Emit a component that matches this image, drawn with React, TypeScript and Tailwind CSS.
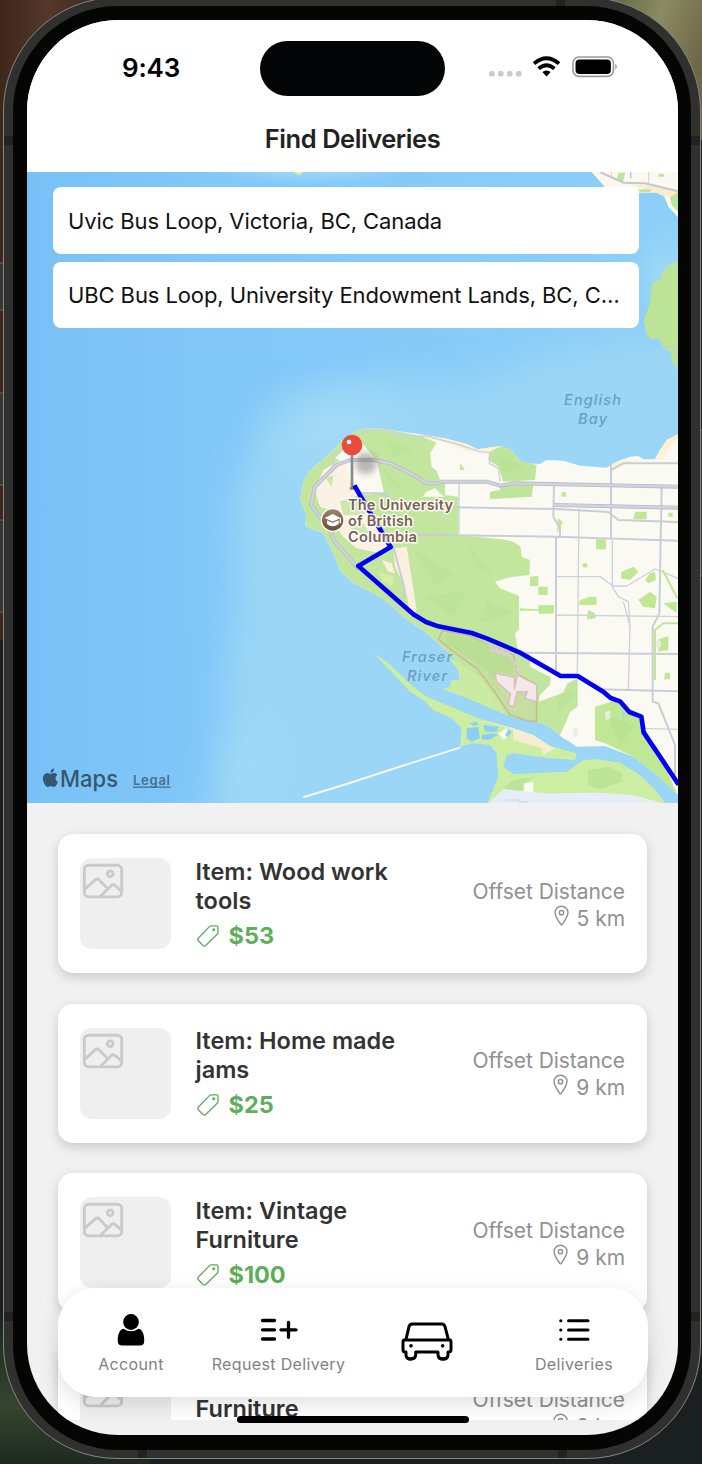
import React from "react";
import { IoImageOutline, IoLocationOutline } from "react-icons/io5";

type Delivery = { item: string; price: string; distance: string };

const deliveries: Delivery[] = [
  { item: "Item: Wood work tools", price: "$53", distance: "5 km" },
  { item: "Item: Home made jams", price: "$25", distance: "9 km" },
  { item: "Item: Vintage Furniture", price: "$100", distance: "9 km" },
  { item: "Item: Vintage Furniture", price: "$100", distance: "9 km" },
];

function Backdrop() {
  return (
    <svg className="absolute inset-0" width="702" height="1464" viewBox="0 0 702 1464">
      <defs>
        <linearGradient id="wood" x1="0" y1="0" x2="1" y2="0">
          <stop offset="0" stopColor="#3f261b" />
          <stop offset="0.4" stopColor="#54382b" />
          <stop offset="1" stopColor="#34221a" />
        </linearGradient>
        <linearGradient id="bark" x1="0" y1="0" x2="1" y2="0.4">
          <stop offset="0" stopColor="#4c5234" />
          <stop offset="0.6" stopColor="#8b8b62" />
          <stop offset="1" stopColor="#6f6748" />
        </linearGradient>
        <linearGradient id="moss" x1="0" y1="0" x2="0" y2="1">
          <stop offset="0" stopColor="#1c2a1c" />
          <stop offset="0.6" stopColor="#35452f" />
          <stop offset="1" stopColor="#1d2920" />
        </linearGradient>
      </defs>
      <rect width="702" height="1464" fill="#1a2020" />
      <rect width="120" height="640" fill="url(#wood)" />
      <rect x="580" width="122" height="140" fill="url(#bark)" />
      <rect y="1320" width="150" height="144" fill="url(#moss)" />
      <g fill="#363636" stroke="#686868">
        <rect x="-2" y="263" width="10" height="47" />
        <rect x="-2" y="393" width="10" height="92" />
        <rect x="-2" y="520" width="10" height="92" />
        <rect x="698" y="430" width="10" height="146" />
      </g>
    </svg>
  );
}

function FrameBands() {
  return (
    <svg className="absolute inset-0" width="702" height="1464" viewBox="0 0 702 1464">
      <g fill="#222222">
        <rect x="4" y="136" width="9" height="9" />
        <rect x="691" y="136" width="9" height="9" />
        <rect x="4" y="1312" width="9" height="9" />
        <rect x="691" y="1312" width="9" height="9" />
        <rect x="138" y="1450" width="9" height="8" />
        <rect x="558" y="1450" width="9" height="8" />
        <rect x="556" y="0" width="9" height="6" />
      </g>
    </svg>
  );
}

function StatusBar() {
  return (
    <div className="relative flex h-[92px] shrink-0 items-center justify-between pl-[95px] pr-[59px]">
      <span className="pt-[4px] text-[26px] font-semibold leading-[32px] tracking-[-0.2px] text-black">9:43</span>
      <div className="absolute left-[233px] top-[20.5px] h-[55px] w-[185px] rounded-full bg-[#040506]" />
      <svg width="132" height="24" viewBox="487 54 132 24">
        <g fill="#cbcbcb">
          <rect x="489" y="71" width="5.6" height="5.6" rx="1.8" />
          <rect x="498" y="71" width="5.6" height="5.6" rx="1.8" />
          <rect x="507" y="71" width="5.6" height="5.6" rx="1.8" />
          <rect x="516" y="71" width="5.6" height="5.6" rx="1.8" />
        </g>
        <g fill="none" stroke="#000" strokeWidth="3.8">
          <path d="M534 63.6 Q546.5 52.8 559 63.6" />
          <path d="M538.6 68.6 Q546.5 61.8 554.4 68.6" />
        </g>
        <path d="M542.3 72 Q546.5 68.8 550.7 72 L546.5 76.6Z" fill="#000" />
        <rect x="573" y="57" width="40.4" height="19.4" rx="6" fill="none" stroke="#999" strokeWidth="1.6" />
        <rect x="575.5" y="59.4" width="35.4" height="14.6" rx="4" fill="#000" />
        <path d="M615.3 63.6 Q618.4 66.7 615.3 69.8Z" fill="#999" />
      </svg>
    </div>
  );
}

function MapCanvas() {
  return (
    <svg
      className="absolute inset-0 font-[Inter,'Liberation_Sans',sans-serif]"
      width="651"
      height="631"
      viewBox="27 172 651 631"
    >
      <defs>
        <linearGradient id="sea" x1="0" y1="0" x2="1" y2="0">
          <stop offset="0" stopColor="#79c0f6" />
          <stop offset="0.3" stopColor="#82c8f8" />
          <stop offset="1" stopColor="#8ccff8" />
        </linearGradient>
        <radialGradient id="shallow">
          <stop offset="0" stopColor="#a6dcf7" />
          <stop offset="1" stopColor="#a6dcf7" stopOpacity="0" />
        </radialGradient>
        <linearGradient id="badge" x1="0" y1="0" x2="0" y2="1">
          <stop offset="0" stopColor="#a2836a" />
          <stop offset="1" stopColor="#6d4c39" />
        </linearGradient>
        <filter id="soft" x="-50%" y="-50%" width="200%" height="200%">
          <feGaussianBlur stdDeviation="9" />
        </filter>
        <filter id="shelf" x="-20%" y="-20%" width="140%" height="140%">
          <feGaussianBlur stdDeviation="17" />
        </filter>
      </defs>
      <rect x="27" y="172" width="651" height="631" fill="url(#sea)" />
      <path d="M700 330L560 350L460 385L380 378L310 398L260 435L234 500L238 590L226 680L226 750L198 840H700Z" fill="#9bd6f6" filter="url(#shelf)" />
      <ellipse cx="330" cy="425" rx="90" ry="60" fill="url(#shallow)" opacity=".7" />
      <ellipse cx="250" cy="760" rx="50" ry="60" fill="url(#shallow)" opacity=".5" />
      <ellipse cx="310" cy="168" rx="100" ry="16" fill="url(#shallow)" />
      <ellipse cx="668" cy="280" rx="40" ry="60" fill="url(#shallow)" opacity=".8" />
      <path d="M294 172H303L300 175L296 174Z" fill="#e6eda0" />

      {/* North shore */}
      <g transform="translate(440 160) scale(.33333)">
        <path d="M455 36L495 82L595 98L650 98L672 108L685 140L720 178V36Z" fill="#fbf8ef" />
        <path d="M560 72L610 85L650 98L680 112L714 108V96L640 78Z" fill="#fbeccb" />
        <path d="M535 38H555L550 64L530 60Z M690 112L714 95V155L695 135Z M595 88H632V97H600Z M656 42H672V50H656Z" fill="#bfe59a" />
        <path d="M480 36L550 68L615 70L714 94" fill="none" stroke="#c3c7d2" strokeWidth="6" />
        <path d="M626 36V72M514 36V50" stroke="#d0d3da" strokeWidth="3" />
        <path d="M572 36V55" stroke="#8fd0f6" strokeWidth="4" />
        <path d="M720 304L690 312L665 340L660 358L635 370L630 430L612 480L618 520L632 538L655 535L672 565L692 575L698 610L720 638Z" fill="#bde397" />
        <path d="M660 540L670 560H695L707 575L714 630" fill="none" stroke="#c8ceca" strokeWidth="4" />
      </g>

      <g transform="translate(280 400) scale(.33333)">
        {/* Mainland */}
        <path d="M60 300L70 245L85 215L150 160L190 118L235 88L290 84L345 92L420 103L500 116L560 132L592 148L665 138L695 152L720 182L735 190L780 192L800 180L850 182L900 197L980 203L1010 185L1050 170L1075 168L1090 178L1125 178L1140 150L1160 120L1200 100V1190L1155 1145L1110 1108L1060 1070L975 1038L890 1040L840 1005L800 975L770 966L700 952L540 885L490 868L510 860L515 842L540 840L535 812L545 795L480 735L440 700L370 650L330 612L300 590L215 545L180 510L165 470L130 400L95 387L75 377L80 345Z" fill="#fbfaf2" />
        <path d="M420 103L500 116L560 132L592 148L665 138L640 160H600L560 152L500 130L430 115ZM980 205L1010 185L1090 178L1010 200ZM1125 178L1160 120L1200 100V112L1168 140L1150 178Z" fill="#fbf3d0" />
        {/* Parks */}
        <path d="M60 300L70 245L85 215L150 160L190 118L235 88L290 84L345 92L420 107L470 128L450 160L455 200L470 212L480 240L495 250V285L535 290V405L665 418L700 425L722 440L725 470L750 480L748 525L690 532L645 545L660 565L717 588V690L705 700L715 760L750 762V800L812 832L810 855L780 885L775 905L850 878L862 850L893 835V920L870 935L858 965L840 1005L800 975L770 966L700 952L540 885L490 868L510 860L515 842L540 840L535 812L545 795L480 735L440 700L370 650L330 612L300 590L215 545L180 510L165 470L130 400L95 387L75 377L80 345Z" fill="#c2e69e" />
        <path d="M420 300L440 275L465 265L480 280L495 290L425 290Z" fill="#fbfaf2" />
        <path d="M490 868L510 860L515 842L540 840L535 812L500 765L600 830L680 945L540 885Z" fill="#c9eba2" />
        <path d="M630 155L665 138L695 152L720 182L770 195L765 240L670 245L655 200L625 180ZM660 255H760L755 290L630 298V275L660 270Z" fill="#bfe59a" />
        <path d="M540 190L555 210H540ZM845 277H858V290H845ZM1065 335H1100V358H1060ZM1165 338H1178V350H1165ZM835 355L848 365L842 380L830 400ZM948 418H978V448H948ZM750 530L775 528V558H750ZM775 560H803V585H775ZM908 490H922V502H908ZM1025 515L1060 500L1075 515L1050 540L1022 535ZM1095 540L1110 520L1125 515L1128 540L1105 550ZM1075 600L1110 575L1130 590L1125 625L1090 620ZM900 600L930 590L950 592V615H897ZM720 625L775 628V616L822 615V640L778 642L775 632H720ZM925 630L945 640L948 655L920 658ZM1150 610L1190 605V640ZM1135 718L1165 708V750L1135 755ZM1155 818H1170V838H1152ZM945 920L1010 900L1050 935L1085 950L1090 1000L1130 1070L1160 1110L1190 1180L1110 1108L1060 1070L975 1030L945 1020Z" fill="#bfe794" />
        <path d="M975 935L990 932L992 955L978 960ZM880 985L893 983L892 1008L880 1010ZM1128 722H1142V742H1128Z" fill="#e8eee5" />
        {/* Campus */}
        <path d="M165 190L215 160L215 250L240 290L340 430L300 460L230 445L190 410L160 370L150 330L120 320L105 275L130 210Z" fill="#fbf1e4" />
        <path d="M165 175L210 130L245 128L290 180L312 278L255 285L210 240L200 190Z" fill="#fbfaf2" />
        <path d="M180 305L235 285L270 320L250 345L190 345ZM210 380L250 370L280 420L250 430ZM138 235L160 225L155 262Z" fill="#cbe8aa" />
        <path d="M340 445L380 440L410 630L390 650L382 590L365 540L345 500ZM305 480L335 490L345 520L325 515Z" fill="#fbf0df" />
        <path d="M295 515L340 530L338 560L310 545Z" fill="#d8eda6" />
        {/* Faint relief */}
        <g fill="#86bd6a" opacity=".07">
          <path d="M400 450L520 520L470 560ZM560 430L640 520L590 500ZM430 590L560 570L520 650ZM620 600L700 640L600 670ZM320 120L400 150L340 170ZM300 190L380 280L330 250ZM650 170L740 200L680 220ZM840 860L890 880L830 940ZM980 940L1060 980L1020 1040Z" />
        </g>
        {/* Minor roads */}
        <g fill="none" stroke="#cdd1da" strokeWidth="4" strokeLinejoin="round">
          <path d="M160 205V170L200 130L250 95L310 90L370 108L440 108L530 132L600 155L628 158V190L655 205L660 245" />
          <path d="M897 325L892 820M997 420V560L1015 590L1045 605L1050 680L1045 870M537 250V400" />
          <path d="M830 530H960L1000 558H1040L1125 507L1194 535M830 645L1194 650M1085 985L1194 988M1050 680L1030 605" />
        </g>
        <g fill="none" stroke="#c9cdd6" strokeWidth="6" strokeLinejoin="round">
          <path d="M400 404L830 410L1194 422M520 322L830 327L985 336L1015 360L1194 366M822 255L820 350L840 385V410M828 410V810M993 190V415M1145 260L1138 640L1118 680V905L1135 910L1185 1035V1130M720 758L1194 762M950 868L1194 874M993 210L1030 190H1194M240 280H310L350 310M340 440L375 570L370 595L345 625" />
        </g>
        <g fill="none" strokeLinejoin="round">
          <path d="M480 245H620L660 257L700 250L1194 260M822 315L1194 323M480 250H440L410 230L330 190L280 180H210L170 195L105 260L93 315L150 390L160 420L235 505" stroke="#b7bac8" strokeWidth="12" />
          <path d="M480 245H620L660 257L700 250L1194 260M822 315L1194 323M480 250H440L410 230L330 190L280 180H210L170 195L105 260L93 315L150 390L160 420L235 505" stroke="#d1d4df" strokeWidth="7" />
        </g>
        <path d="M1148 510L1192 595M1125 840V690L1150 670H1194" fill="none" stroke="#bfe794" strokeWidth="6" />
        {/* Reserve outline */}
        <path d="M488 692L475 718L520 755L590 805L640 870L690 945L740 962L770 965V855L712 822L700 765L630 735L560 705Z" fill="#d8c3a5" fillOpacity=".22" stroke="#c1ad8c" strokeOpacity=".65" strokeWidth="5" />
        <path d="M500 700L630 730L700 780V820L650 815L640 850L680 910L620 810L495 725Z" fill="#b7df91" opacity=".8" />
        <path d="M645 820L703 832V868L712 825L770 855V905L735 895L742 875H712L700 920L685 915L692 882L650 845Z" fill="#f2e8e8" stroke="#dabcc9" strokeWidth="4" />
        <path d="M625 735L690 765L712 800V825M630 750L690 765" fill="none" stroke="#e3c9d4" strokeWidth="9" strokeDasharray="14 5" />

        {/* Islands */}
        <path d="M280 760L320 785L400 860L440 890L500 915L600 957L700 985L760 1005L810 1038L890 1060L885 1080L800 1073L700 1060L680 1065L670 1100L700 1122L760 1120L860 1115L910 1080L955 1078L1020 1088L1080 1125L1130 1175L1160 1215H620L655 1130L650 1060L630 1035L580 1030L540 1040L545 985L515 955L460 930L430 900L390 875L330 810Z" fill="#cbeea3" />
        <path d="M600 957L700 985L760 1005L810 1038L825 1045L790 1065L785 1045L700 1020V990Z" fill="#f5edcd" />
        <path d="M560 985L595 980L600 1015L575 1025L560 1015ZM610 975L655 980L650 995H615ZM605 1005L640 1000L655 1005L625 1020L605 1018ZM570 970L590 965L595 975L580 978Z" fill="#8ccff6" />
        <path d="M655 1000L680 985L690 1005L670 1020ZM730 1150L760 1145V1180L730 1175Z" fill="#fbfaf2" />
        <path d="M675 1005L685 988L695 995L685 1012Z" fill="#8ccff6" />
        <path d="M670 1165L700 1140L765 1130L735 1150L730 1175ZM925 1110L990 1100L1025 1120V1145L960 1168L925 1155Z" fill="#9ccc7c" opacity=".3" />
        <path d="M625 1210L670 1168L800 1180L960 1178L1060 1185L1150 1210Z" fill="#e7edf6" />
        <path d="M675 1200H720V1206H745" fill="none" stroke="#d6dce7" strokeWidth="5" />
        <path d="M835 1003L870 1012L890 1035L850 1015Z" fill="#fbfaf2" />
        <path d="M1025 930L1035 940L1030 960Z" fill="#9bd7f7" />
        <path d="M70 1192L200 1152L400 1087L542 1042" fill="none" stroke="#f4f8ee" strokeWidth="6" />

        {/* Pin */}
        <ellipse cx="258" cy="190" rx="32" ry="32" fill="#555" opacity=".4" filter="url(#soft)" />
        <rect x="209" y="261" width="16" height="8" rx="3" fill="#777" />
        <rect x="212" y="160" width="8" height="106" fill="#8b8b8f" />
        <circle cx="216" cy="135" r="31" fill="#ea4b3c" />
        <circle cx="207" cy="126" r="7" fill="#fff" />
        {/* Route */}
        <path d="M223 256L255 312L332 441L235 498L400 643L438 666L475 679L575 699L620 715L718 757L842 828H893L970 875L992 894L1020 904L1048 936L1084 950L1091 997L1150 1085L1196 1154" fill="none" stroke="#0400f0" strokeWidth="14" strokeLinejoin="round" />
        <circle cx="158" cy="360" r="36" fill="#fff" />
        <circle cx="158" cy="360" r="32" fill="url(#badge)" />
        <g fill="#fff">
          <path d="M134 354L158 342L182 354L158 365Z" />
          <path d="M141 360L158 368L176 360V372Q158 386 141 372Z" />
          <path d="M179 354H183V370H179Z" />
        </g>
        <path d="M138 358L158 367L178 358" fill="none" stroke="#8a6a54" strokeWidth="2" />
      </g>

      <g fontSize="14.6" fontWeight="600" fill="#7d5f52" stroke="#fff" strokeWidth="3" strokeLinejoin="round" paintOrder="stroke" strokeOpacity=".9">
        <text x="348" y="510" textLength="105">The University</text>
        <text x="348" y="526" textLength="65">of British</text>
        <text x="348" y="542" textLength="69">Columbia</text>
      </g>
      <g fontSize="14.5" fontWeight="500" fontStyle="italic" fill="#6d9fbd">
        <text x="564" y="405" textLength="57">English</text>
        <text x="578" y="424" textLength="29">Bay</text>
        <text x="402" y="662" textLength="50">Fraser</text>
        <text x="407" y="681" textLength="40">River</text>
      </g>
      <path
        transform="translate(39.4 766.7) scale(.92)"
        d="M18.700 19.500C17.900 20.700 17 22 15.700 22C14.300 22 13.900 21.200 12.400 21.200S10.400 22 9.100 22C7.800 22 6.800 20.700 6 19.500C4.200 17 2.900 12.500 4.700 9.400C5.600 7.900 7.100 6.900 8.800 6.900C10.100 6.900 11.300 7.800 12.100 7.800S14.400 6.700 15.900 6.900C16.600 6.900 18.400 7.200 19.500 8.900C16.600 10.700 17.100 14.900 20 16.200C19.700 17.400 19.300 18.500 18.700 19.500ZM13 3.500C13.700 2.700 14.900 2 16 2C16.100 3.200 15.700 4.400 15 5.200C14.300 6.100 13.200 6.700 12.100 6.600C12 5.500 12.500 4.300 13 3.500Z"
        fill="#35576f"
      />
      <text x="60" y="786.500" fontSize="22.500" fontWeight="500" fill="#35576f" textLength="58" lengthAdjust="spacingAndGlyphs">Maps</text>
      <g fill="#44708f" fontSize="13" fontWeight="600">
        <text x="133" y="785" textLength="37">Legal</text>
        <rect x="133" y="786.500" width="37.500" height="1.300" />
      </g>
    </svg>
  );
}

function AddressField({ value }: { value: string }) {
  return (
    <div className="flex h-[66.5px] items-center rounded-[8px] bg-white px-[15px] pt-px">
      <span className="truncate text-[22px] leading-[32px] tracking-[-0.1px] text-[#111]">{value}</span>
    </div>
  );
}

function PriceTagIcon() {
  return (
    <svg width="22" height="22" viewBox="0 0 22 22" fill="none" stroke="currentColor" strokeWidth="1.35">
      <path d="M14 .8H19.600Q21 .8 21 2.200V7.600Q21 8.400 20.400 9L8.700 20.500Q7.300 21.600 6 20.400L1.400 15.800Q.2 14.400 1.400 13L12.700 1.400Q13.300 .8 14 .8Z" />
      <circle cx="16.700" cy="4.700" r="1.500" fill="currentColor" stroke="none" />
    </svg>
  );
}

function DeliveryCard({ item, price, distance }: Delivery) {
  return (
    <article className="flex h-[139px] shrink-0 items-center rounded-[15px] bg-white pl-[22.5px] pr-[22px] shadow-[0_4px_12px_rgba(0,0,0,0.17)]">
      <div className="h-[91px] w-[91px] shrink-0 rounded-[12px] bg-[#efefef]">
        <IoImageOutline className="h-[46px] w-[46px] text-[#cacaca]" />
      </div>
      <div className="ml-[24.5px] flex w-[215px] flex-col">
        <h2 className="text-[23.5px] font-semibold leading-[29px] tracking-[0.02px] text-[#333]">{item}</h2>
        <div className="mt-[6px] flex h-[30px] items-center gap-[10px] pl-px text-[#5fae5b]">
          <PriceTagIcon />
          <span className="text-[23.5px] font-bold leading-[30px]">{price}</span>
        </div>
      </div>
      <div className="ml-auto flex flex-col items-end pt-[2px] text-[21px] leading-[27px] tracking-[-0.05px] text-[#919191]">
        <span className="whitespace-nowrap">Offset Distance</span>
        <div className="flex h-[27px] items-center gap-[4px]">
          <IoLocationOutline className="mb-[6px] h-[23px] w-[23px]" />
          <span>{distance}</span>
        </div>
      </div>
    </article>
  );
}

function PersonIcon() {
  return (
    <svg width="28" height="32" viewBox="0 0 28 32">
      <circle cx="14" cy="8" r="7.900" />
      <path d="M6.500 14.800Q14 19.800 21.500 14.800C26 15.500 27.500 22 27.200 27.500Q27 31.500 23 31.500H5Q1 31.500 .8 27.500C.5 22 2 15.500 6.500 14.800Z" />
    </svg>
  );
}

function ListPlusIcon() {
  return (
    <svg width="38" height="24" viewBox="0 0 38 24" fill="none" stroke="#000" strokeWidth="3.300" strokeLinecap="round">
      <path d="M2.500 2.500H14.500M2.500 11.800H14.500M2.500 21H14.500M21 11.800H36M28.500 4.300V19.300" />
    </svg>
  );
}

function CarIcon() {
  return (
    <svg width="52" height="39" viewBox="175 428 156 117" fill="none" stroke="#000" strokeWidth="9" strokeLinejoin="round">
      <path d="M190 480L199 442Q201 434 209 434H297Q305 434 307 442L317 480" />
      <path d="M184 482H322Q325 482 325 490V511Q325 518 317 518H316V526Q316 538 301 538T286 526V518H219V526Q219 538 204 538T190 526V518H188Q181 518 181 511V490Q181 482 184 482Z" />
      <path d="M190 528Q191 541 204 541T219 528M286 528Q287 541 301 541T316 528" strokeWidth="6" />
      <circle cx="205" cy="499.500" r="5.500" fill="#000" stroke="none" />
      <circle cx="300" cy="499.500" r="5.500" fill="#000" stroke="none" />
    </svg>
  );
}

function ListIcon() {
  return (
    <svg width="31" height="24" viewBox="0 0 31 24" stroke="#000" strokeWidth="3" strokeLinecap="round">
      <path d="M9.500 2.700H29M9.500 12H29M9.500 21.200H29M1.700 2.700H1.900M1.700 12H1.900M1.700 21.200H1.900" />
    </svg>
  );
}

function Tab({ label, className, children }: { label: string; className: string; children: React.ReactNode }) {
  return (
    <button className={`flex flex-col items-center ${className}`}>
      <span className="flex h-[34px] items-center">{children}</span>
      <span className="mt-[7.5px] whitespace-nowrap text-[16px] leading-[20px] tracking-[0.35px] text-[#828282]">{label}</span>
    </button>
  );
}

function TabBar() {
  return (
    <nav className="absolute bottom-[38px] left-[30.5px] flex h-[109px] w-[590px] items-start rounded-[38px] bg-white pt-[24.500px] shadow-[0_6px_22px_rgba(0,0,0,0.13)]">
      <Tab label="Account" className="w-[147px]"><PersonIcon /></Tab>
      <Tab label="Request Delivery" className="w-[148px]"><ListPlusIcon /></Tab>
      <button className="flex h-[57px] w-[148px] items-center justify-center">
        <CarIcon />
      </button>
      <Tab label="Deliveries" className="w-[147px]"><ListIcon /></Tab>
    </nav>
  );
}

export default function App() {
  return (
    <div className="relative h-[1464px] w-[702px] overflow-hidden font-[Inter,'Liberation_Sans',sans-serif]">
      <Backdrop />
      <div className="relative ml-[3px] mt-[-3px] h-[1462px] w-[698px] rounded-[114px] border border-[#858585] bg-[#30302f] px-[9px] py-[8px]">
        <div className="h-full w-full rounded-[105px] bg-[#050504] px-[14px] pb-[15px] pt-[14px]">
          <div className="relative flex h-[1415px] w-[651px] flex-col overflow-hidden rounded-[91px] bg-[#f1f1f1]">
            <header className="flex h-[152px] shrink-0 flex-col bg-white">
              <StatusBar />
              <h1 className="pt-[11px] text-center text-[25.5px] font-semibold leading-[32px] tracking-[-0.45px] text-[#222]">Find Deliveries</h1>
            </header>
            <section className="relative h-[631px] shrink-0">
              <MapCanvas />
              <div className="relative flex w-[611.5px] flex-col gap-[8px] pl-[26px] pt-[15px]">
                <AddressField value="Uvic Bus Loop, Victoria, BC, Canada" />
                <AddressField value="UBC Bus Loop, University Endowment Lands, BC, Canada" />
              </div>
            </section>
            <main className="flex h-[617px] shrink-0 flex-col gap-[30.500px] overflow-hidden pl-[30.5px] pr-[31px] pt-[31px]">
              {deliveries.map((delivery, index) => (
                <DeliveryCard key={index} {...delivery} />
              ))}
            </main>
            <TabBar />
            <div className="absolute bottom-[12px] left-[210px] h-[7px] w-[232px] rounded-full bg-black" />
          </div>
        </div>
      </div>
      <FrameBands />
    </div>
  );
}
